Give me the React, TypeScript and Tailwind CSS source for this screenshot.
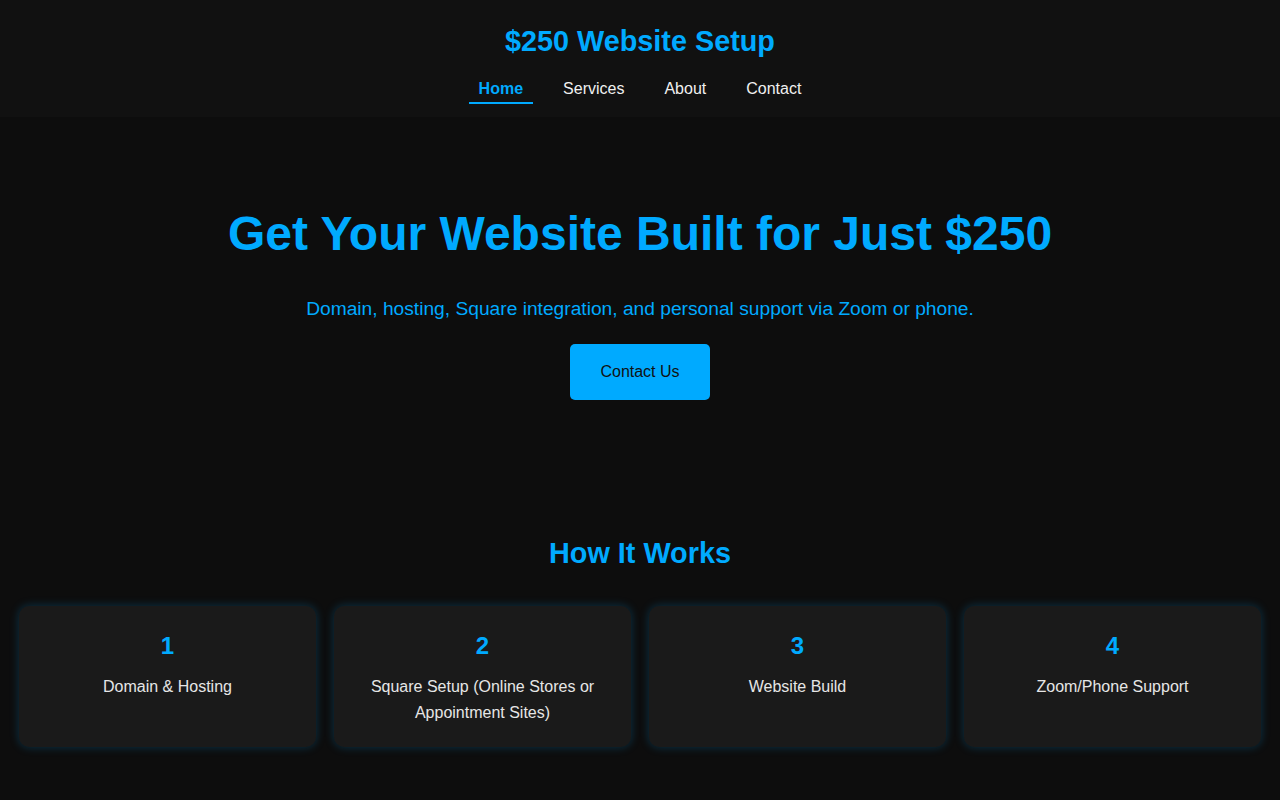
import React from "react";

const steps = [
  { n: "1", label: "Domain & Hosting" },
  { n: "2", label: "Square Setup (Online Stores or Appointment Sites)" },
  { n: "3", label: "Website Build" },
  { n: "4", label: "Zoom/Phone Support" },
];

const App = () => {
  return (
    <div className="min-h-screen bg-[#0d0d0d] text-[#e6e6e6] font-['Liberation_Sans',Arial,sans-serif]">
      <header className="bg-[#111111] h-[117px] flex flex-col items-center pt-[24px]">
        <h1 className="text-[28.8px] leading-[34px] font-bold text-[#00aaff]">$250 Website Setup</h1>
        <nav className="mt-[21px] flex gap-5 text-[16px] leading-[20px]">
          <a className="px-2.5 pb-[3px] font-bold text-[#00aaff] border-b-2 border-[#00aaff]">Home</a>
          <a className="px-2.5 pb-[3px] text-[#f0f0f0]">Services</a>
          <a className="px-2.5 pb-[3px] text-[#f0f0f0]">About</a>
          <a className="px-2.5 pb-[3px] text-[#f0f0f0]">Contact</a>
        </nav>
      </header>

      <section className="flex flex-col items-center pt-[88px] pb-[100px]">
        <h2 className="text-[48px] leading-[58px] font-bold text-[#00aaff]">
          Get Your Website Built for Just $250
        </h2>
        <p className="mt-[34px] text-[19.2px] leading-[24px] text-[#00aaff]">
          Domain, hosting, Square integration, and personal support via Zoom or phone.
        </p>
        <button className="mt-[23px] w-[140px] h-[56px] rounded-[5px] bg-[#00aaff] text-[#111] text-[16px]">
          Contact Us
        </button>
      </section>

      <section className="pt-[36px] pb-[54px]">
        <h2 className="text-center text-[28.8px] leading-[34px] font-bold text-[#00aaff]">How It Works</h2>
        <div className="mt-[36px] px-[19px] grid grid-cols-4 gap-[18px]">
          {steps.map((s) => (
            <div
              key={s.n}
              className="h-[141px] rounded-[10px] bg-[#1a1a1a] shadow-[0_0_10px_rgba(0,170,255,0.25)] flex flex-col items-center px-[30px] pt-[26px] text-center"
            >
              <h3 className="text-[24px] leading-[28px] font-bold text-[#00aaff]">{s.n}</h3>
              <p className="mt-[14px] text-[16px] leading-[26px] text-[#e6e6e6]">{s.label}</p>
            </div>
          ))}
        </div>
      </section>
    </div>
  );
};

export default App;
